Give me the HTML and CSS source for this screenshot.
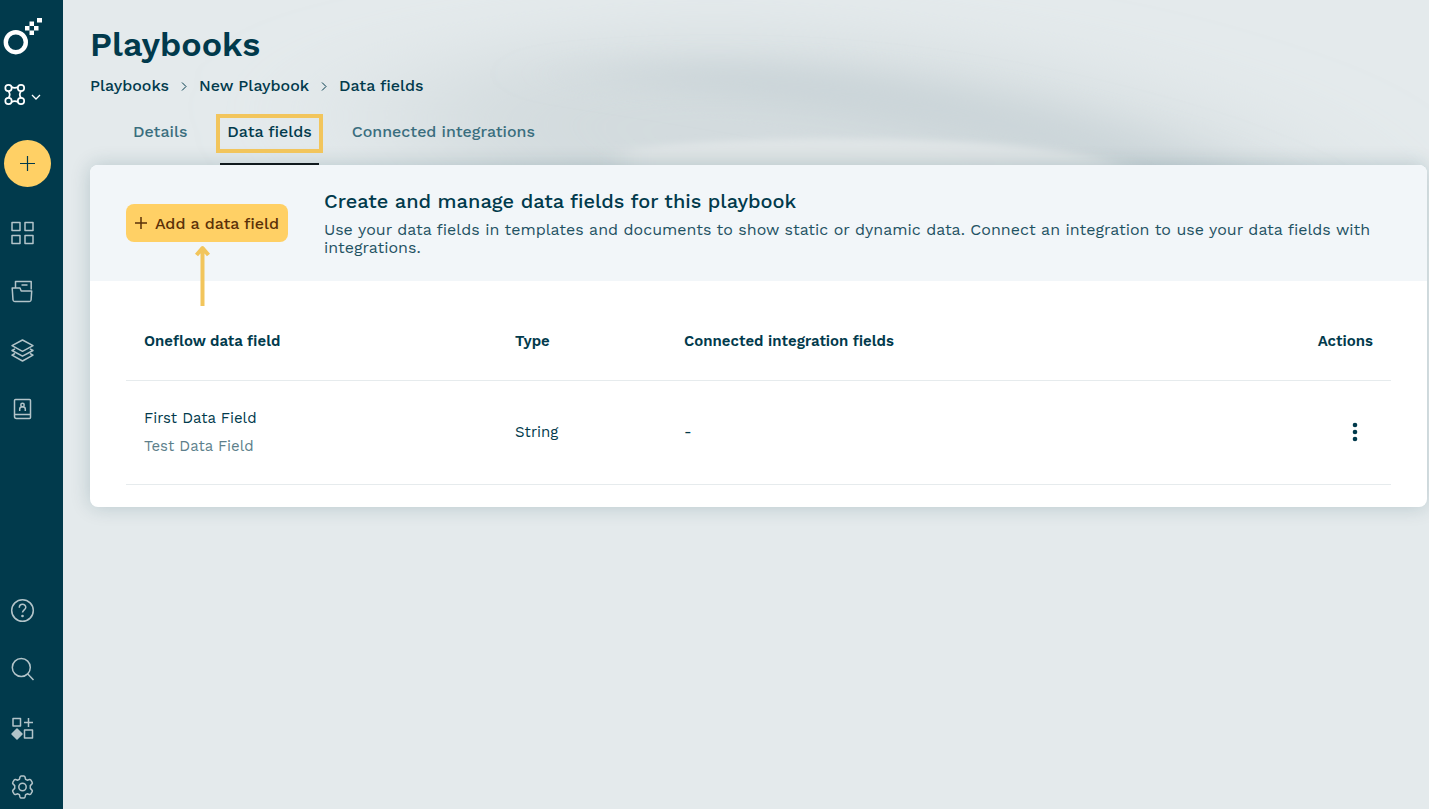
FILE: index.html
```html
<!DOCTYPE html>
<html lang="en">

<head>
  <meta charset="UTF-8">
  <meta name="viewport" content="width=device-width, initial-scale=1.0">
  <title>Playbooks</title>
  <link rel="stylesheet" href="styles.css">
</head>

<body>
  <div class="app">
    <nav class="sidebar" aria-label="Main">
      <a class="logo" href="#" aria-label="Home">
        <svg width="40" height="40" viewBox="0 0 40 40">
          <circle cx="11.800" cy="25.200" r="10" fill="none" stroke="#fff" stroke-width="4.400" />
          <path fill="#fff" d="M33 1h5v4.500h-5zM25.500 4.500h4.500v4.500h-4.500zM21 9h4.500v4.500h-4.500zM30 9h4.500v4.500h-4.500zM25.500 13.500h4.500v4.500h-4.500z" />
        </svg>
      </a>
      <button class="workspace" aria-label="Switch workspace">
        <svg width="38" height="24" viewBox="0 0 38 24" fill="none" stroke="#fff" stroke-width="1.700">
          <circle cx="4.500" cy="5" r="3.200" />
          <circle cx="17" cy="5" r="3.200" />
          <circle cx="4.500" cy="18" r="3.200" />
          <circle cx="17" cy="18" r="3.200" />
          <path d="M7.500 4q3.200 1.800 6.500 0M7.500 19q3.200-1.800 6.500 0M4.500 8.200q2.500 3.300 0 6.600M17 8.200q-2.500 3.300 0 6.600" />
          <path d="M28 12l4 4 4-4" stroke-width="1.300" />
        </svg>
      </button>
      <button class="create" aria-label="Create">
        <svg width="16" height="16" viewBox="0 0 16 16" fill="none" stroke="#013a4c" stroke-width="1.200">
          <path d="M7.500 0v15M0 7.500h15" />
        </svg>
      </button>

      <div class="links">
        <a href="#" aria-label="Dashboard">
          <svg viewBox="0 0 24 24">
            <path d="M1 1.500h8v8H1zM14 1.500h8v8h-8zM1 14.500h8v8H1zM14 14.500h8v8h-8z" />
          </svg>
        </a>
        <a href="#" aria-label="Documents">
          <svg viewBox="0 0 24 24">
            <path d="M4.500 7.500v-6h15.700v8M10.500 5h6M1.200 8h7.800l1.200 3h10.500l-.6 9q-.2 1.500-1.700 1.500H3.700q-1.500 0-1.700-1.500z" />
          </svg>
        </a>
        <a href="#" aria-label="Templates">
          <svg viewBox="0 0 24 24">
            <path d="M11.500 1L22 6.700 11.500 12.300 1 6.700zM4 9.800l-3 1.700 10.500 5.700L22 11.500l-3-1.700M4 14.500l-3 1.700L11.500 22 22 16.200l-3-1.700" />
          </svg>
        </a>
        <a href="#" aria-label="Contacts">
          <svg viewBox="0 0 24 24">
            <path d="M4.500 1.500h14q1 0 1 1v17q0 1-1 1h-13q-2 0-2-2v-16q0-1 1-1zM3.500 16.500h16" />
            <path d="M8.700 13v-2q0-2.300 2.800-2.300t2.800 2.300v2" />
            <circle cx="11.500" cy="7" r="1.700" />
          </svg>
        </a>
      </div>

      <div class="links links-bottom">
        <a href="#" aria-label="Help">
          <svg viewBox="0 0 24 24">
            <circle cx="11.500" cy="12.500" r="10.800" />
            <path d="M8.300 9.700c0-4.500 6.500-4.300 6.500-.4 0 2.500-3.300 2.600-3.300 5.300" />
            <circle class="solid" cx="11.500" cy="18" r=".6" />
          </svg>
        </a>
        <a href="#" aria-label="Search">
          <svg viewBox="0 0 24 24">
            <circle cx="10.300" cy="10.500" r="9" />
            <path d="M16.800 17l5.700 6" />
          </svg>
        </a>
        <a href="#" aria-label="Apps">
          <svg viewBox="0 0 24 24">
            <path d="M2 2.500h7.500v7.500H2zM13.500 14h8v8h-8zM17.500 2v9M13 6.500h9" />
            <path class="solid" d="M6 13l5 5-5 5-5-5z" />
          </svg>
        </a>
        <a href="#" aria-label="Settings">
          <svg viewBox="0 0 24 24">
            <path d="M9 2q.3-1 1.200-1h2.600q.9 0 1.200 1l.6 2.300 1.600.9 2.300-.7q.9-.2 1.400.6l1.300 2.300q.5.800-.2 1.500l-1.700 1.700v2.800l1.700 1.700q.7.700.2 1.500l-1.300 2.300q-.5.800-1.400.6l-2.300-.7-1.600.9-.6 2.300q-.3 1-1.200 1h-2.600q-.9 0-1.200-1l-.6-2.300-1.600-.9-2.300.7q-.9.200-1.400-.6l-1.300-2.300q-.5-.8.200-1.500l1.700-1.700v-2.800L2 8.900q-.7-.7-.2-1.500l1.300-2.300q.5-.8 1.400-.6l2.300.7 1.600-.9z" />
            <circle cx="11.500" cy="12" r="3.700" />
          </svg>
        </a>
      </div>
    </nav>

    <main class="main">
      <!-- soft wave behind the header -->
      <svg class="wave" viewBox="0 0 1366 260" preserveAspectRatio="none" aria-hidden="true">
        <defs>
          <filter id="haze" x="-50%" y="-100%" width="200%" height="300%">
            <feGaussianBlur stdDeviation="90 32" />
          </filter>
          <filter id="soft" x="-50%" y="-100%" width="200%" height="300%">
            <feGaussianBlur stdDeviation="50 13" />
          </filter>
          <filter id="edge" x="-20%" y="-50%" width="140%" height="200%">
            <feGaussianBlur stdDeviation="14 3" />
          </filter>
        </defs>
        <path filter="url(#haze)" fill="#d3dbde" d="M330 90C480 20 820 30 1010 85S1190 150 1260 240L500 240C420 200 320 140 330 90z" />
        <path filter="url(#soft)" fill="#c9d3d7" fill-opacity=".8" d="M520 73C680 50 840 75 960 105S1120 150 1200 190L1080 190C960 135 680 100 520 73z" />
        <path filter="url(#edge)" fill="#e2e7e9" fill-opacity=".8" d="M560 150C660 135 850 136 950 146S1050 160 1090 185L560 190z" />
      </svg>

      <h1>Playbooks</h1>

      <nav class="breadcrumbs" aria-label="Breadcrumb">
        <a href="#">Playbooks</a>
        <svg width="6" height="9" viewBox="0 0 6 9"><path d="M1 .5l4 4-4 4" /></svg>
        <a href="#">New Playbook</a>
        <svg width="6" height="9" viewBox="0 0 6 9"><path d="M1 .5l4 4-4 4" /></svg>
        <a href="#">Data fields</a>
      </nav>

      <div class="tabs" role="tablist">
        <button class="tab" role="tab">Details</button>
        <button class="tab active" role="tab" aria-selected="true">Data fields</button>
        <button class="tab" role="tab">Connected integrations</button>
      </div>

      <section class="card">
        <header class="card-header">
          <div class="add">
            <button class="add-btn">
              <svg width="12" height="12" viewBox="0 0 12 12"><path d="M6 0v12M0 6h12" /></svg>
              Add a data field
            </button>
            <svg class="arrow" width="18" height="62" viewBox="0 0 18 62"><path d="M8.500 62V5M2.500 11l6-7 6 7" /></svg>
          </div>
          <div class="intro">
            <h2>Create and manage data fields for this playbook</h2>
            <p>Use your data fields in templates and documents to show static or dynamic data. Connect an integration to use your data fields with integrations.</p>
          </div>
        </header>

        <div class="card-body">
          <table>
            <thead>
              <tr>
                <th class="col-name">Oneflow data field</th>
                <th class="col-type">Type</th>
                <th>Connected integration fields</th>
                <th class="col-actions">Actions</th>
              </tr>
            </thead>
            <tbody>
              <tr>
                <td>
                  <div>First Data Field</div>
                  <div class="muted">Test Data Field</div>
                </td>
                <td>String</td>
                <td>-</td>
                <td class="col-actions">
                  <button class="more" aria-label="More actions">
                    <svg width="6" height="20" viewBox="0 0 6 20">
                      <circle cx="3" cy="2" r="2.300" />
                      <circle cx="3" cy="9" r="2.300" />
                      <circle cx="3" cy="16" r="2.300" />
                    </svg>
                  </button>
                </td>
              </tr>
            </tbody>
          </table>
        </div>
      </section>
    </main>
  </div>
</body>

</html>
```
FILE: styles.css
```css
* {
  box-sizing: border-box;
}

body {
  margin: 0;
  font-family: "Work Sans", Inter, sans-serif;
  font-size: 16px;
  color: #013a4c;
  background-color: #e4eaec;
}

h1,
h2,
p {
  margin: 0;
}

a {
  color: inherit;
  text-decoration: none;
}

button {
  padding: 0;
  border: none;
  background: none;
  color: inherit;
  font: inherit;
  cursor: pointer;
}

svg {
  display: block;
  overflow: visible;
}

.app {
  display: flex;
  min-height: 100vh;
}

/* sidebar */
.sidebar {
  display: flex;
  flex-direction: column;
  align-items: flex-start;
  flex: none;
  width: 63px;
  padding: 17px 4px 10px;
  background-color: #013a4c;
}

.workspace {
  margin-top: 26px;
}

.create {
  display: flex;
  align-items: center;
  justify-content: center;
  width: 47px;
  height: 47px;
  margin-top: 33px;
  border-radius: 50%;
  background-color: #ffd065;
}

.links {
  display: flex;
  flex-direction: column;
  gap: 35px;
  margin: 34px 0 0 7px;
}

.links-bottom {
  margin-top: auto;
}

.links svg {
  width: 24px;
  height: 24px;
  fill: none;
  stroke: #b3c4c9;
  stroke-width: 1.5;
  stroke-linejoin: round;
}

.links .solid {
  fill: #b3c4c9;
}

/* content */
.main {
  position: relative;
  flex: 1;
  min-width: 0;
  padding: 22px 2px 22px 27px;
  overflow: hidden;
}

.wave {
  position: absolute;
  top: 0;
  left: 0;
  z-index: -1;
  width: 100%;
  height: 260px;
  overflow: hidden;
}

h1 {
  font-size: 34px;
  font-weight: 600;
  line-height: 44px;
}

.breadcrumbs {
  display: flex;
  align-items: center;
  gap: 12px;
  margin-top: 10px;
  font-weight: 500;
  line-height: 20px;
}

.breadcrumbs svg {
  fill: none;
  stroke: #013a4c;
}

.tabs {
  display: flex;
  gap: 26px;
  height: 69px;
  padding-left: 36px;
}

.tab {
  position: relative;
  padding: 4px 7px 0;
  border-bottom: 2px solid transparent;
  color: #3a6e7e;
  font-weight: 500;
}

.tab.active {
  border-bottom-color: #10191d;
  color: #013a4c;
}

/* highlight frame round the open tab */
.tab.active::before {
  content: "";
  position: absolute;
  top: 18px;
  right: -4px;
  bottom: 10px;
  left: -4px;
  border: 4px solid #f2c55c;
}

.card {
  border-radius: 8px;
  background-color: #fff;
  box-shadow: 0 0 20px rgba(1, 58, 76, 0.2);
}

.card-header {
  display: flex;
  align-items: center;
  gap: 36px;
  min-height: 116px;
  padding: 20px 36px;
  border-radius: 8px 8px 0 0;
  background-color: #f2f6f9;
}

.add {
  position: relative;
  flex: none;
}

.add-btn {
  display: flex;
  align-items: center;
  justify-content: center;
  gap: 8px;
  width: 162px;
  height: 38px;
  border-radius: 8px;
  background-color: #ffd065;
  color: #5b3108;
  font-weight: 500;
}

.add-btn svg {
  fill: none;
  stroke: #5b3108;
  stroke-width: 1.5;
}

.arrow {
  position: absolute;
  top: 40px;
  left: 68px;
  fill: none;
  stroke: #f2c55c;
  stroke-width: 4;
  stroke-linejoin: round;
}

.arrow path {
  stroke-linecap: butt;
}

h2 {
  margin-bottom: 8px;
  font-size: 20px;
  font-weight: 500;
  line-height: 24px;
}

.intro p {
  line-height: 18px;
  color: #1f5263;
}

.card-body {
  padding: 22px 36px;
}

table {
  width: 100%;
  border-collapse: collapse;
  table-layout: fixed;
  font-size: 15px;
}

th,
td {
  padding: 0 18px;
  border-bottom: 1px solid #e6ebed;
  text-align: left;
}

th {
  height: 77px;
  font-weight: 600;
}

td {
  height: 104px;
  line-height: 28px;
}

.col-name {
  width: 371px;
}

.col-type {
  width: 169px;
}

.col-actions {
  width: 120px;
  text-align: right;
}

.muted {
  color: #5d7f8b;
}

.more {
  padding: 0 15px;
  vertical-align: middle;
}

.more svg {
  fill: #013a4c;
}
```
